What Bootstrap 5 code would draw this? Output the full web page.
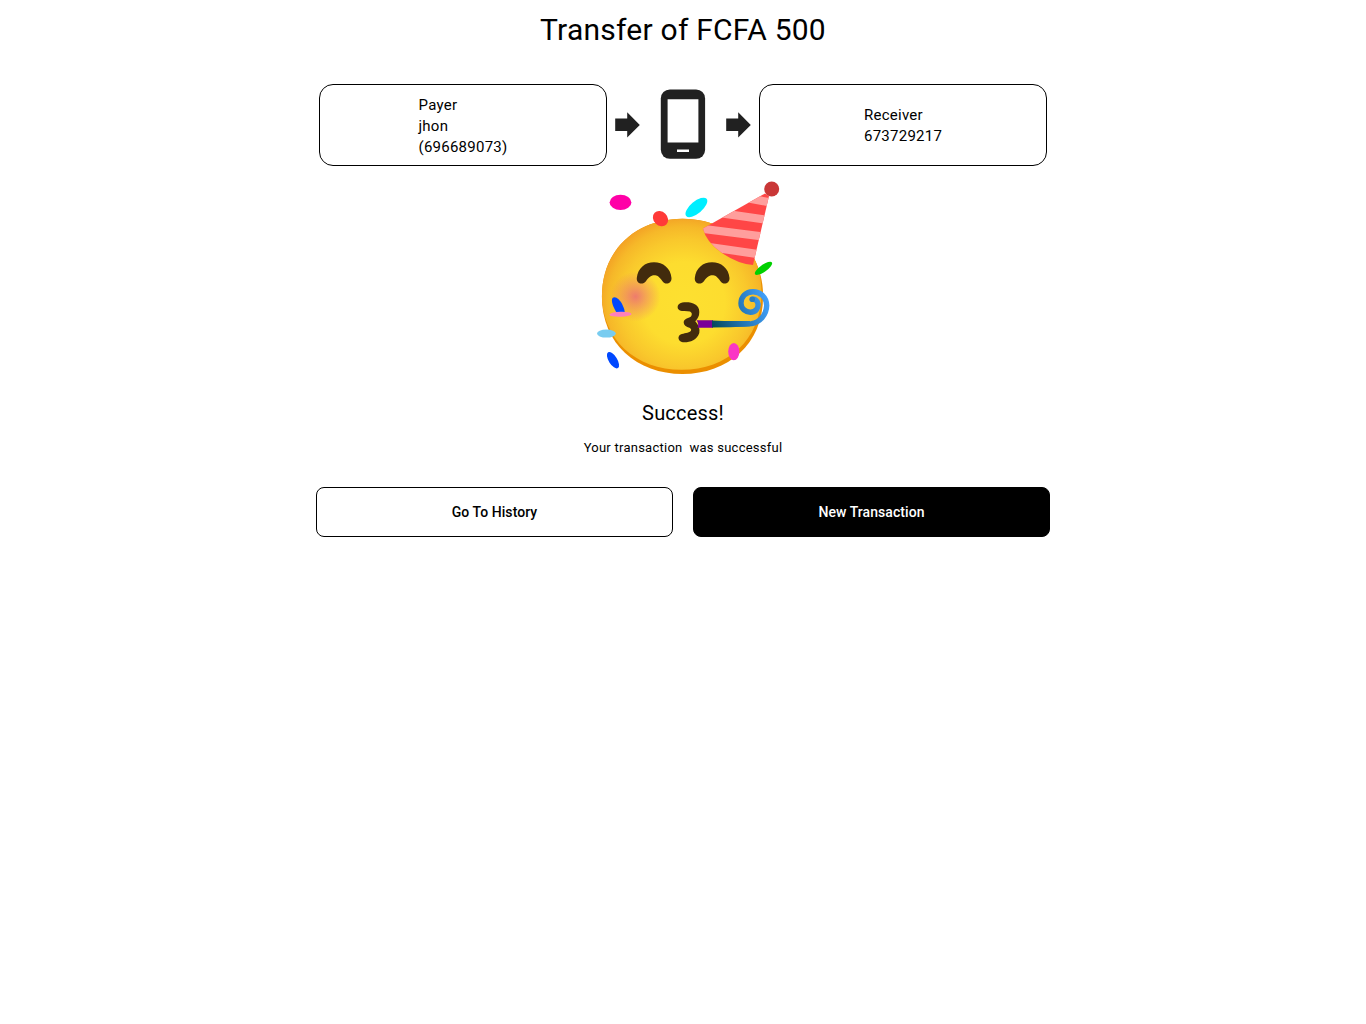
<!DOCTYPE html>
<html lang="en">
<head>
<meta charset="utf-8">
<meta name="viewport" content="width=device-width, initial-scale=1">
<title>Transfer</title>
<link href="https://cdn.jsdelivr.net/npm/bootstrap@5.3.0/dist/css/bootstrap.min.css" rel="stylesheet">
<style>
body{font-family:Roboto,"Liberation Sans",sans-serif;color:#000;background:#fff}
.transfer{width:734px}
.transfer-title{font-size:30px;line-height:36px;letter-spacing:.24px;font-weight:400;padding-top:12px;margin-bottom:36px}
.parties{padding:0 3px}
.party{width:288px;height:82px;border:1px solid #000;border-radius:14px;font-size:15px;line-height:21px;letter-spacing:.25px;padding-top:2px}
.party-text{width:89px}
.party-text.receiver{width:78px}
.party-art{display:block;width:152px;height:82px}
.emoji{display:block;width:200px;height:205px;margin-top:9px;margin-left:14px}
.result-title{font-size:20px;line-height:24px;letter-spacing:.2px;font-weight:400;margin:21px 0 0}
.result-text{font-size:13px;line-height:20px;letter-spacing:.25px;margin:13px 0 0;white-space:pre}
.actions{gap:20px;margin-top:29px}
.action{height:50px;border:1px solid #000;border-radius:8px;font-size:14px;font-weight:500;letter-spacing:.07px;color:#000}
.action.solid{background:#000;color:#fff}
</style>
</head>
<body>
<main class="transfer mx-auto d-flex flex-column align-items-center">
  <h1 class="transfer-title text-center">Transfer of FCFA 500</h1>
  <section class="parties d-flex w-100">
    <div class="party d-flex align-items-center justify-content-center">
      <div class="party-text">Payer<br>jhon<br>(696689073)</div>
    </div>
    <svg class="party-art" viewBox="607 84 152 82" aria-hidden="true">
      <g fill="#212121">
        <path d="M615.2 118.500h12v-6.200l12.600 12.700-12.600 12.400v-6.300h-12z"/>
        <path d="M726.2 118.500h12v-6.200l12.600 12.700-12.600 12.400v-6.300h-12z"/>
        <rect x="660.8" y="89.4" width="44.3" height="69.4" rx="9"/>
      </g>
      <path fill="#fff" d="M667.6 99.300h30.800v43.300h-30.800zM677 149.400h12v2.500h-12z"/>
    </svg>
    <div class="party d-flex align-items-center justify-content-center">
      <div class="party-text receiver">Receiver<br>673729217</div>
    </div>
  </section>
  <svg class="emoji" viewBox="590 175 200 205" role="img" aria-label="Celebrating face">
    <defs>
      <radialGradient id="face" gradientUnits="userSpaceOnUse" cx="684" cy="303" r="91">
        <stop offset="0" stop-color="#fde030"/><stop offset=".45" stop-color="#fddd2f"/><stop offset=".7" stop-color="#f9c82c"/><stop offset=".84" stop-color="#f6b829"/><stop offset="1" stop-color="#f29823"/>
      </radialGradient>
      <radialGradient id="cheek"><stop offset="0" stop-color="#ed7770" stop-opacity=".95"/><stop offset=".4" stop-color="#ed7770" stop-opacity=".55"/><stop offset="1" stop-color="#ed7770" stop-opacity="0"/></radialGradient>
      <linearGradient id="horn" gradientUnits="userSpaceOnUse" x1="712" y1="323" x2="769" y2="303"><stop offset="0" stop-color="#06495c"/><stop offset=".5" stop-color="#2476b5"/><stop offset="1" stop-color="#42a0fa"/></linearGradient>
      <clipPath id="head"><path d="M682.500 218.800C637 218.800 601.900 249 601.900 296.500S637 374 682.500 374 763.100 344 763.100 296.500 728 218.800 682.500 218.800z"/></clipPath>
      <clipPath id="hat"><path d="M703 228.500 765 193.500 769 196 753 265Q738 264 722 253Q706 242 703 228.500z"/></clipPath>
    </defs>
    <g clip-path="url(#head)">
      <rect x="600" y="217" width="165" height="159" fill="#eb8f00"/>
      <path d="M681.500 214.500C636 214.500 601.500 245 601.500 292.500S636 369.800 681.500 369.800 761.500 340 761.500 292.500 727 214.500 681.500 214.500z" fill="url(#face)"/>
      <circle cx="635.500" cy="296.500" r="25" fill="url(#cheek)"/>
    </g>
    <g fill="#422b0d">
      <path id="eye" d="M636.800 278C637.800 268 645 262.200 654 262.200S670.700 268 671.500 278C671.800 284 665 285.300 662.500 281.200C659 276.300 657 275.300 654.300 275.300S649.300 276.500 645.900 281.200C643 285.300 636.200 284 636.800 278z"/>
      <use href="#eye" x="58"/>
      <path d="M682.300 302.600C690 301.500 699.500 303.500 699.300 312Q699.300 317.300 695.300 321.200Q700.500 327 699.300 333C697 340.500 688.500 342.800 682.800 342.200C678.200 341.600 677 336.300 680.600 334.500C684 333 688.500 333.300 690.800 331Q692 329.500 690 328Q683.700 326 683.700 322.500C683.700 319 688 318.300 691 316.500Q693 313 690 311.500Q687 310.700 681.800 311C676.300 310.700 676 303.600 682.300 302.600z"/>
    </g>
    <path d="M696.500 320.300H713V327.700H697.500Q699.300 324 696.500 320.300z" fill="#7a0099"/>
    <path d="M712 324C728 324 742 324.500 751.500 323.600C759.500 322.500 766.500 315 766.700 305.500C766.500 297 760 291.700 753 291.700C745.500 291.700 741 297 741 303.300C741 309 746 312.300 750.500 312.200C756 312.200 758.600 307.800 758 303.700C757.300 300.200 754.700 298.700 752 299.400" fill="none" stroke="url(#horn)" stroke-width="5.400"/>
    <path d="M712 320.400Q731 321.500 750 320.900V326.300Q730 327.500 712 327.600z" fill="url(#horn)"/>
    <circle cx="752.200" cy="299.200" r="2.800" fill="#2b7ebf"/>
    <g clip-path="url(#hat)">
      <rect x="700" y="185" width="75" height="85" fill="#ff4646"/>
      <!-- pale bands across the hat -->
      <g fill="none" stroke="#ff9e9c" stroke-width="8.300">
        <path d="M735 195.800 775 203.300M715 212.300 775 221M695 227.800 775 238M695 245 775 256.400"/>
      </g>
    </g>
    <circle cx="771.700" cy="189" r="7.500" fill="#c93737"/>
    <ellipse cx="620.500" cy="202.400" rx="10.900" ry="7.700" fill="#ff00a7"/>
    <ellipse cx="660.500" cy="218.600" rx="8.300" ry="6.900" transform="rotate(45 660.500 218.600)" fill="#ff3a38"/>
    <ellipse cx="696.400" cy="207.400" rx="13.300" ry="6" transform="rotate(-40 696.400 207.400)" fill="#00eeff"/>
    <ellipse cx="763.500" cy="268.300" rx="10.300" ry="3.500" transform="rotate(-35 763.500 268.300)" fill="#00d000"/>
    <path d="M612.600 298C615.200 295.600 619.800 299.600 622.200 304.200Q624.700 309 624.800 312.500H616.600C613 307 610.700 300.500 612.600 298z" fill="#0048ff"/>
    <ellipse cx="620.500" cy="314.300" rx="11.100" ry="2.500" transform="rotate(-2 620.500 314.300)" fill="#ff80b8"/>
    <ellipse cx="606.400" cy="333.600" rx="9.400" ry="4" fill="#78ccf0"/>
    <ellipse cx="613" cy="360.200" rx="9.300" ry="4.200" transform="rotate(58 613 360.200)" fill="#0048ff"/>
    <ellipse cx="733.800" cy="351.600" rx="5.600" ry="8.600" fill="#fa35c5"/>
  </svg>
  <h2 class="result-title">Success!</h2>
  <p class="result-text">Your transaction  was successful</p>
  <div class="actions d-flex w-100">
    <button type="button" class="action btn flex-fill w-50">Go To History</button>
    <button type="button" class="action solid btn flex-fill w-50">New Transaction</button>
  </div>
</main>
<script src="https://cdn.jsdelivr.net/npm/bootstrap@5.3.0/dist/js/bootstrap.bundle.min.js"></script>
</body>
</html>
